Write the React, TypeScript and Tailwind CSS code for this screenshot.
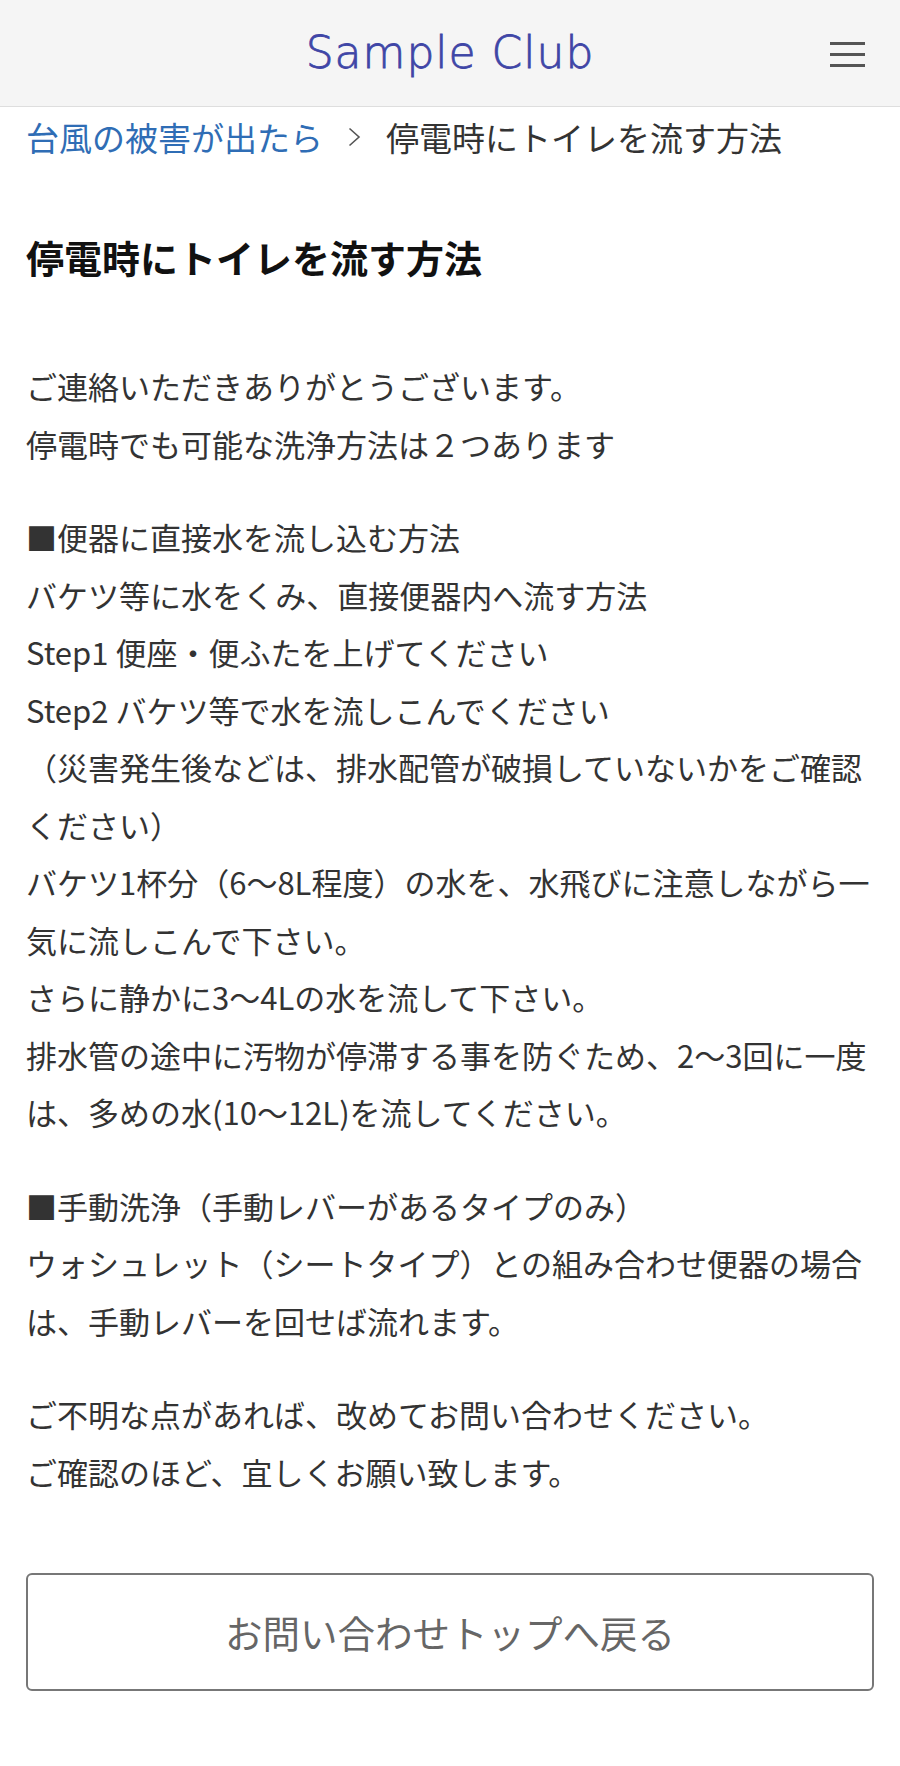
import React from "react";

const jp = { fontFamily: '"Noto Sans CJK JP", "Noto Sans", sans-serif' };

// Body copy, split exactly as the rows appear on the page
const paragraphs: string[][] = [
  ["ご連絡いただきありがとうございます。", "停電時でも可能な洗浄方法は２つあります"],
  [
    "■便器に直接水を流し込む方法",
    "バケツ等に水をくみ、直接便器内へ流す方法",
    "Step1 便座・便ふたを上げてください",
    "Step2 バケツ等で水を流しこんでください",
    "（災害発生後などは、排水配管が破損していないかをご確認",
    "ください）",
    "バケツ1杯分（6〜8L程度）の水を、水飛びに注意しながら一",
    "気に流しこんで下さい。",
    "さらに静かに3〜4Lの水を流して下さい。",
    "排水管の途中に汚物が停滞する事を防ぐため、2〜3回に一度",
    "は、多めの水(10〜12L)を流してください。",
  ],
  [
    "■手動洗浄（手動レバーがあるタイプのみ）",
    "ウォシュレット（シートタイプ）との組み合わせ便器の場合",
    "は、手動レバーを回せば流れます。",
  ],
  ["ご不明な点があれば、改めてお問い合わせください。", "ご確認のほど、宜しくお願い致します。"],
];

const Header = () => (
  <header className="h-[107px] bg-[#f5f5f5] border-b border-[#dedede] relative flex items-center justify-center">
    <h1
      className="text-[44px] font-light tracking-[1px] text-[#3f46a6] leading-none [-webkit-text-stroke:0.8px_#3f46a6]"
      style={{ fontFamily: '"DejaVu Sans", sans-serif' }}
    >
      Sample Club
    </h1>
    <button className="absolute right-[35px] top-[42px] flex flex-col gap-[8px]" aria-label="menu">
      <span className="block w-[35px] h-[3px] bg-[#555]" />
      <span className="block w-[35px] h-[3px] bg-[#555]" />
      <span className="block w-[35px] h-[3px] bg-[#555]" />
    </button>
  </header>
);

export default function App() {
  return (
    <div className="w-[900px] min-h-[1766px] bg-white" style={jp}>
      <Header />

      <main className="px-[26px]">
        {/* Breadcrumb */}
        <nav className="mt-[5px] h-[50px] flex items-center text-[33px] leading-none">
          <a className="text-[#2f6db5]">台風の被害が出たら</a>
          <svg className="mx-[25px]" width="13" height="20" viewBox="0 0 13 20" fill="none">
            <polyline points="1.5,1.5 11,10 1.5,18.5" stroke="#555" strokeWidth="1.6" />
          </svg>
          <span className="text-[#333]">停電時にトイレを流す方法</span>
        </nav>

        <h2 className="mt-[66px] text-[38px] leading-[57px] font-bold text-[#111]">
          停電時にトイレを流す方法
        </h2>

        <div className="mt-[72px] text-[31px] leading-[57.5px] text-[#333]">
          {paragraphs.map((lines, i) => (
            <p key={i} className={i > 0 ? "mt-[36px]" : ""}>
              {lines.map((line, j) => (
                <span key={j} className="block whitespace-nowrap">
                  {line}
                </span>
              ))}
            </p>
          ))}
        </div>

        <button className="mt-[73px] w-full h-[118px] border-2 border-[#777] rounded-[6px] flex items-center justify-center text-[37.5px] text-[#666]">
          お問い合わせトップへ戻る
        </button>
      </main>
    </div>
  );
}
